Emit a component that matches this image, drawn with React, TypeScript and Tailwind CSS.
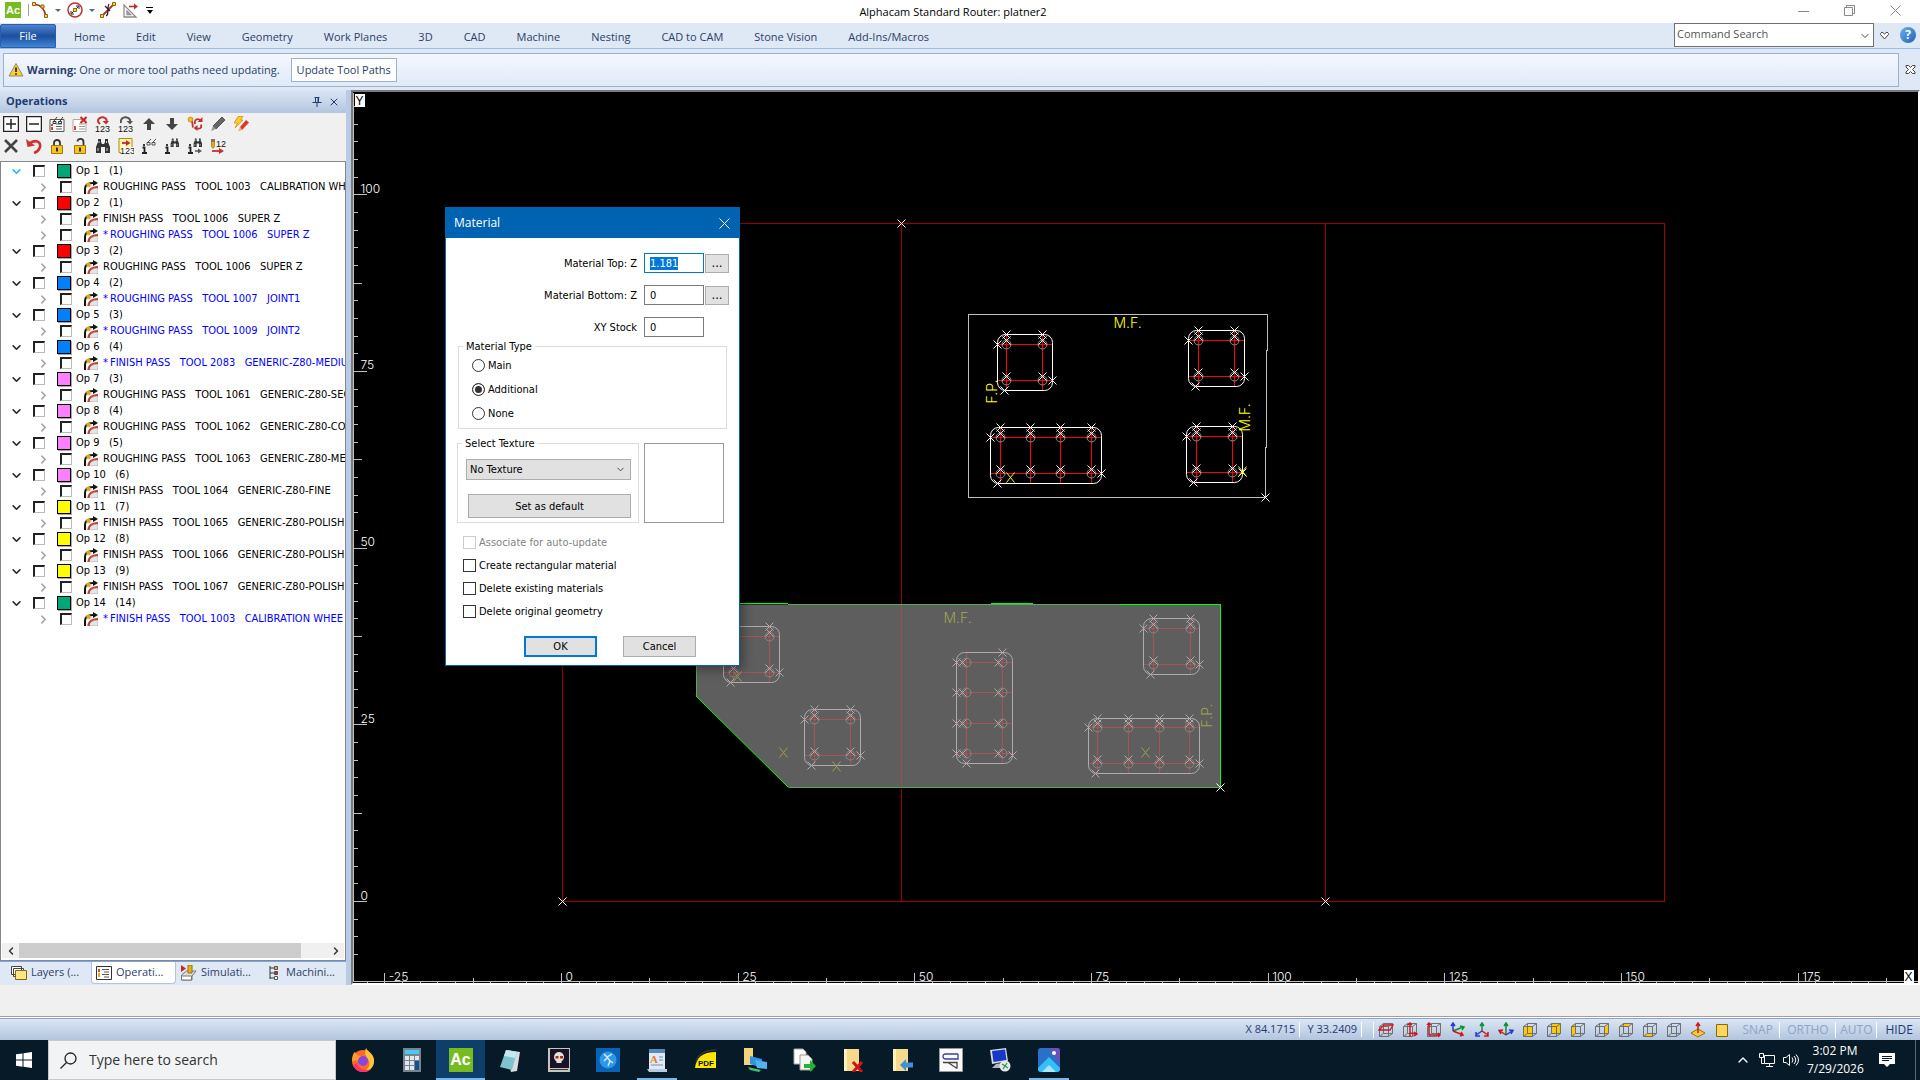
'use client';

// CORE
import { useEffect, useRef, useState } from 'react';
import type { ReactNode } from 'react';

// ICONS
import { BsChevronDown, BsChevronRight } from 'react-icons/bs';
import { ChevronDown, ChevronLeft, ChevronRight, ChevronUp, X } from 'lucide-react';

// INTERFACES
interface Pass {
  text: string;
  stale?: boolean;
}

interface Operation {
  id: number;
  count: number;
  swatch: string;
  passes: Pass[];
}

interface PodShape {
  x: number;
  y: number;
  w: number;
  h: number;
  cols: number[];
  rows: number[];
  turned?: boolean;
}

// CONSTANTS
const MENU = [
  'Home',
  'Edit',
  'View',
  'Geometry',
  'Work Planes',
  '3D',
  'CAD',
  'Machine',
  'Nesting',
  'CAD to CAM',
  'Stone Vision',
  'Add-Ins/Macros',
];

const OPERATIONS: Operation[] = [
  { id: 1, count: 1, swatch: 'bg-[#00a878]', passes: [{ text: 'ROUGHING PASS   TOOL 1003   CALIBRATION WH' }] },
  {
    id: 2,
    count: 1,
    swatch: 'bg-[#ff0000]',
    passes: [
      { text: 'FINISH PASS   TOOL 1006   SUPER Z' },
      { text: 'ROUGHING PASS   TOOL 1006   SUPER Z', stale: true },
    ],
  },
  { id: 3, count: 2, swatch: 'bg-[#ff0000]', passes: [{ text: 'ROUGHING PASS   TOOL 1006   SUPER Z' }] },
  { id: 4, count: 2, swatch: 'bg-[#0080ff]', passes: [{ text: 'ROUGHING PASS   TOOL 1007   JOINT1', stale: true }] },
  { id: 5, count: 3, swatch: 'bg-[#0080ff]', passes: [{ text: 'ROUGHING PASS   TOOL 1009   JOINT2', stale: true }] },
  { id: 6, count: 4, swatch: 'bg-[#0080ff]', passes: [{ text: 'FINISH PASS   TOOL 2083   GENERIC-Z80-MEDIU', stale: true }] },
  { id: 7, count: 3, swatch: 'bg-[#ff80ff]', passes: [{ text: 'ROUGHING PASS   TOOL 1061   GENERIC-Z80-SEG' }] },
  { id: 8, count: 4, swatch: 'bg-[#ff80ff]', passes: [{ text: 'ROUGHING PASS   TOOL 1062   GENERIC-Z80-COA' }] },
  { id: 9, count: 5, swatch: 'bg-[#ff80ff]', passes: [{ text: 'ROUGHING PASS   TOOL 1063   GENERIC-Z80-MED' }] },
  { id: 10, count: 6, swatch: 'bg-[#ff80ff]', passes: [{ text: 'FINISH PASS   TOOL 1064   GENERIC-Z80-FINE' }] },
  { id: 11, count: 7, swatch: 'bg-[#ffff00]', passes: [{ text: 'FINISH PASS   TOOL 1065   GENERIC-Z80-POLISH' }] },
  { id: 12, count: 8, swatch: 'bg-[#ffff00]', passes: [{ text: 'FINISH PASS   TOOL 1066   GENERIC-Z80-POLISH' }] },
  { id: 13, count: 9, swatch: 'bg-[#ffff00]', passes: [{ text: 'FINISH PASS   TOOL 1067   GENERIC-Z80-POLISH' }] },
  { id: 14, count: 14, swatch: 'bg-[#00a878]', passes: [{ text: 'FINISH PASS   TOOL 1003   CALIBRATION WHEE', stale: true }] },
];

const UPPER_PODS: PodShape[] = [
  { x: 997, y: 334, w: 55, h: 56, cols: [1006, 1042], rows: [344, 380] },
  { x: 1188, y: 330, w: 56, h: 56, cols: [1198, 1234], rows: [340, 376] },
  { x: 990, y: 427, w: 111, h: 56, cols: [1000, 1030, 1060, 1091], rows: [437, 473] },
  { x: 1186, y: 426, w: 56, h: 56, cols: [1196, 1232], rows: [436, 472] },
];

const LOWER_PODS: PodShape[] = [
  { x: 723, y: 626, w: 56, h: 56, cols: [733, 769], rows: [636, 672] },
  { x: 804, y: 709, w: 56, h: 56, cols: [814, 850], rows: [719, 755] },
  { x: 956, y: 652, w: 56, h: 111, cols: [966, 1002], rows: [662, 692, 723, 753], turned: true },
  { x: 1143, y: 618, w: 56, h: 56, cols: [1153, 1190], rows: [628, 664] },
  { x: 1088, y: 718, w: 111, h: 55, cols: [1097, 1128, 1159, 1189], rows: [727, 763] },
];

// Pixels for one drawing unit
const UNIT = 7.067;

function Icon({ size = 'size-4', box = 16, children }: { size?: string; box?: number; children: ReactNode }) {
  return (
    <svg viewBox={`0 0 ${box} ${box}`} className={`${size} shrink-0`} fill="none" aria-hidden="true">
      {children}
    </svg>
  );
}

function AcLogo({ className }: { className: string }) {
  return (
    <span
      className={`flex shrink-0 items-center justify-center bg-[#76bc21] font-['Liberation_Sans',sans-serif] font-bold text-white ${className}`}
    >
      Ac
    </span>
  );
}

function TitleBar() {
  return (
    <header className="flex h-[23px] items-start bg-white px-[5px] text-[11px]">
      <div className="flex h-5 flex-1 items-center">
        <AcLogo className="size-4 text-[11px]" />
        <span className="ml-[7px] h-3 w-px bg-[#a0a0a0]" />
        <button aria-label="Line" className="ml-[3px]">
          <Icon>
            <path d="M2 2.5C8 2 12 6 14 14" stroke="#b02a2a" strokeWidth="1.6" />
            <path d="M.5.5h3v3h-3zM9 3h3v3H9zM12.5 12.5h3v3h-3z" fill="#ffd24a" stroke="#8a6a00" />
          </Icon>
        </button>
        <span className="ml-[7px] border-x-[3px] border-t-[3px] border-x-transparent border-t-[#4f6a94]" />
        <button aria-label="Circle" className="ml-[6px]">
          <Icon>
            <circle cx="8" cy="8" r="7" stroke="#b83232" strokeWidth="1.5" />
            <path d="M4.500 11.500l7-7M9 4h3v3M4 9v3h3" stroke="#222" />
            <path d="M6.500 6.500h3v3h-3z" fill="#ffd24a" stroke="#8a6a00" />
          </Icon>
        </button>
        <span className="ml-[6px] border-x-[3px] border-t-[3px] border-x-transparent border-t-[#4f6a94]" />
        <button aria-label="Trim" className="ml-[5px]">
          <Icon>
            <path d="M2 14L14 2" stroke="#b83232" strokeWidth="2" />
            <path d="M6 14c4-2 0-6 3-12M5 4l5 5" stroke="#222" strokeWidth="1.200" />
            <path d="M.5 12.500h3v3h-3zM12.500.5h3v3h-3z" fill="#ffd24a" stroke="#8a6a00" />
          </Icon>
        </button>
        <button aria-label="Measure" className="ml-[7px]">
          <Icon>
            <path d="M1 3v12h12zM4 9v3.500h3.500z" stroke="#8c8c8c" strokeWidth="1.300" />
            <path d="M6 4.500h6" stroke="#b83232" strokeWidth="1.600" />
            <path d="M11 1.500l4 3-4 3z" fill="#b83232" />
          </Icon>
        </button>
        <button aria-label="Customize" className="ml-[7px] flex flex-col items-center gap-[2px]">
          <span className="h-px w-[7px] bg-black" />
          <span className="border-x-[3px] border-t-[4px] border-x-transparent border-t-black" />
        </button>
      </div>
      <h1 className="h-6 leading-6 text-black">Alphacam Standard Router: platner2</h1>
      <div className="flex h-5 flex-1 items-center justify-end gap-[35px] pr-[14px]">
        <button aria-label="Minimize">
          <Icon size="size-[11px]" box={11}>
            <path d="M0 6.500h11" stroke="#888" />
          </Icon>
        </button>
        <button aria-label="Restore">
          <Icon size="size-[11px]" box={11}>
            <path d="M.5 2.500h8v8h-8zM2.500 2.500v-2h8v8h-2" stroke="#888" />
          </Icon>
        </button>
        <button aria-label="Close">
          <Icon size="size-[11px]" box={11}>
            <path d="M.5.5l10 10M10.500.5l-10 10" stroke="#888" />
          </Icon>
        </button>
      </div>
    </header>
  );
}

function Ribbon() {
  return (
    <nav className="flex h-[26px] items-start border-b border-[#9dbde5] bg-[#dfe8f5] text-[11px] text-[#2c3f66]">
      <button className="mt-px h-6 w-14 rounded-t-xs border border-[#2a5db0] bg-linear-to-b from-[#4f83cd] via-[#1d4f9f] via-50% to-[#3f86d8] text-white">
        File
      </button>
      <div className="ml-[18px] flex flex-1 gap-[31px] leading-7">
        {MENU.map((m) => (
          <a key={m} href="#" className="whitespace-nowrap">
            {m}
          </a>
        ))}
      </div>
      <div className="flex items-center">
        <label className="flex h-6 w-[200px] items-start border border-[#707070] bg-white">
          <input
            aria-label="Command search"
            placeholder="Command Search"
            className="h-[18px] w-full min-w-0 px-[2px] outline-none placeholder:text-[#555]"
          />
          <ChevronDown className="mt-[6px] mr-[2px] size-3 shrink-0 text-[#444]" />
        </label>
        <button aria-label="Ribbon options" className="ml-[5px]">
          <Icon size="size-[11px]" box={11}>
            <path d="M1.500 3.500L3 2l2.500 2L8 2l1.500 1.500v1L5.500 9l-4-4.500z" fill="#fff" stroke="#444" />
          </Icon>
        </button>
        <button aria-label="Help" className="mr-1 ml-[10px] size-4 rounded-full bg-linear-to-br from-[#6bb0f0] to-[#1d64b8] text-xs leading-4 font-bold text-white">
          ?
        </button>
      </div>
    </nav>
  );
}

function WarningBar() {
  return (
    <div className="flex h-[41px] items-start bg-[#dfe8f5] pt-1 pl-[3px] text-[11px] text-[#2c3f66]">
      <div className="flex h-[34px] flex-1 items-center border border-[#9db0d0] bg-linear-to-b from-[#f3f7fe] to-[#e0ebf8]">
        <Icon size="ml-1 size-4">
          <path d="M8 1.500L15 14H1z" fill="#ffcf24" stroke="#8a8a8a" strokeLinejoin="round" />
          <path d="M8 5.500v4.500M8 11.300v1.400" stroke="#222" strokeWidth="1.700" />
        </Icon>
        <p className="ml-[3px] whitespace-nowrap">
          <b>Warning:</b> One or more tool paths need updating.
        </p>
        <button className="ml-[11px] h-6 w-[106px] border border-[#9db0d0] bg-white whitespace-nowrap">
          Update Tool Paths
        </button>
      </div>
      <button aria-label="Dismiss warning" className="mr-1 ml-[6px] mt-[11px]">
        <Icon size="size-[11px]" box={11}>
          <path
            d="M1 1.500h2.500l2 2 2-2H10v1.500L7.500 5.500 10 8v1.500H7.500l-2-2-2 2H1V8l2.500-2.500L1 3z"
            fill="#fff"
            stroke="#444"
          />
        </Icon>
      </button>
    </div>
  );
}

function Digits({ y = 15.5, children = '123', x = 0 }: { y?: number; children?: string; x?: number }) {
  return (
    <text x={x} y={y} fontSize="9" fontFamily="Liberation Sans" fill="#111">
      {children}
    </text>
  );
}

const Binoculars = ({ x = 0, y = 0, k = 1 }: { x?: number; y?: number; k?: number }) => (
  <g transform={`translate(${x} ${y}) scale(${k})`}>
    <path d="M3 1h3v3l1 2h2l1-2V1h3v3l2 5v6h-5V9H6v6H1V9l2-5z" fill="#333" />
    <path d="M3 10v3M12 10v3M4 3v2M11.500 3v2" stroke="#ccc" strokeWidth="1" />
  </g>
);

const Padlock = ({ open = false }: { open?: boolean }) => (
  <>
    <path d={open ? 'M5.500 3.500C5.500 0 11.500 0 11.500 4v4' : 'M5 8V5c0-4 6-4 6 0v3'} stroke="#333" strokeWidth="1.800" />
    <path d="M2.500 7.500h11v8h-11z" fill="#f6c326" stroke="#a37800" />
    <path d="M8 9.500v4" stroke="#333" strokeWidth="2" />
  </>
);

const TOOLS_TOP: [string, ReactNode][] = [
  ['Expand all', <path d="M.5.5h15v15H.5zM3 8h10M8 3v10" stroke="#222" strokeWidth="1.500" fill="#fff" />],
  ['Collapse all', <path d="M.5.5h15v15H.5zM3 8h10" stroke="#222" strokeWidth="1.500" fill="#fff" />],
  [
    'View operation',
    <>
      <path d="M1 3.500h14v12H1z" fill="#fff" stroke="#555" />
      <path d="M7 8h6M7 10.500h6M7 13h6" stroke="#666" />
      <path d="M3 8v2M3 11v3" stroke="#d43" strokeWidth="2" />
      <path d="M4 5.500h3v2H4zM9.500 5.500h3v2h-3zM5 5l3-4M11 5l3-4" fill="#eee" stroke="#333" />
    </>,
  ],
  [
    'Remove operation',
    <>
      <path d="M1 3.500h13v12H1z" fill="#fff" stroke="#aaa" />
      <path d="M7 8h6M7 10.500h6M7 13h6" stroke="#999" />
      <path d="M3 10v4" stroke="#d43" strokeWidth="2" />
      <path d="M8.500 1l6 6M14.500 1l-6 6" stroke="#d02020" strokeWidth="2" />
    </>,
  ],
  [
    'Renumber',
    <>
      <path d="M5 8C1 5 4 .8 8 1.300S12 5 11 6" stroke="#c03030" strokeWidth="2" />
      <path d="M7.500 5h6.500l-3 3.500z" fill="#c03030" />
      <Digits />
    </>,
  ],
  [
    'Restore order',
    <>
      <path d="M3 7C2 3 5 1 8 1.300S13 4 12 6" stroke="#555" strokeWidth="2" />
      <path d="M8.500 5H15l-3 3.500z" fill="#555" />
      <Digits />
    </>,
  ],
  ['Move up', <path d="M8 2l6 6h-4v6H6V8H2z" fill="#444" />],
  ['Move down', <path d="M8 14l6-6h-4V2H6v6H2z" fill="#444" />],
  [
    'Update tool path',
    <>
      <path d="M4 3.500c2 2 1 4 2 8M14 4.500C10 1.500 7 4 8 8M9 12c4 1.500 6 0 5-3.500" stroke="#c03030" strokeWidth="1.800" />
      <path d="M10.500 6h5V1zM6.500 12l4-3v6z" fill="#c03030" />
      <circle cx="3.500" cy="3.500" r="2.500" fill="#f5b826" stroke="#b07a00" strokeWidth=".6" />
    </>,
  ],
  [
    'Edit',
    <>
      <path d="M3 10L12 1l3 3-9 9z" fill="#666" stroke="#555" />
      <path d="M3 10l3 3-5 2z" fill="#999" />
    </>,
  ],
  [
    'Quick edit',
    <>
      <path d="M7 11l6-7 3 2.500L9 14z" fill="#d83a2a" />
      <path d="M7 11l2 3-4 1.500z" fill="#e8b070" />
      <path d="M5 .5h5L7.500 4H10l-8 8 2.500-5H1z" fill="#ffcb2d" stroke="#d08a00" strokeWidth=".7" />
    </>,
  ],
];

const TOOLS_BOTTOM: [string, ReactNode][] = [
  ['Delete', <path d="M2 2l12 12M14 2L2 14" stroke="#444" strokeWidth="2.600" />],
  [
    'Undo',
    <>
      <path d="M4 5c6-4 11-1 10 4-1 3-3 5-6 6" stroke="#d22f2f" strokeWidth="2.600" />
      <path d="M0 1l1.500 8L9 7.500z" fill="#d22f2f" />
    </>,
  ],
  ['Lock', <Padlock />],
  ['Unlock', <Padlock open />],
  ['Find', <Binoculars />],
  [
    'Order by tool',
    <>
      <path d="M1 .5h13v14H1z" fill="#fff6b0" stroke="#b8860b" />
      <path d="M4 5h5" stroke="#c03030" strokeWidth="1.800" />
      <path d="M8 2l4.500 3L8 8z" fill="#c03030" />
      <path d="M3 9h13v7H3z" fill="#fff" />
      <Digits x={2} />
    </>,
  ],
  [
    'Information',
    <>
      <path d="M3 6v2M1.500 9.500h2V15M1 15h5" stroke="#222" strokeWidth="1.800" />
      <path d="M6 4.500h3v2.500H6zM11 4.500h3v2.500h-3zM7 4l3-3M12 4l3-3" stroke="#555" />
    </>,
  ],
  [
    'Find information',
    <>
      <path d="M3 6v2M1.500 9.500h2V15M1 15h5" stroke="#222" strokeWidth="1.800" />
      <Binoculars x={6} y={0} k={0.6} />
    </>,
  ],
  [
    'Find next',
    <>
      <path d="M3 6v2M1.500 9.500h2V15M1 15h5" stroke="#222" strokeWidth="1.800" />
      <Binoculars x={6} y={0} k={0.6} />
      <path d="M8 13h4" stroke="#555" strokeWidth="1.500" />
      <path d="M11 10.500l4 2.500-4 2.500z" fill="#555" />
    </>,
  ],
  [
    'Tool order',
    <>
      <path d="M1 1h4v3H1z" fill="#777" />
      <path d="M1.500 3.500h3v5l-1.500 2-1.500-2z" fill="#e6a817" stroke="#8a6a00" strokeWidth=".6" />
      <Digits x={6} y={9}>
        12
      </Digits>
      <path d="M2 13h8" stroke="#c03030" strokeWidth="1.800" />
      <path d="M9 10l5 3-5 3z" fill="#c03030" />
    </>,
  ],
];

function ToolRow({ tools }: { tools: [string, ReactNode][] }) {
  return (
    <div className="flex gap-[7px] pl-[3px]">
      {tools.map(([name, art]) => (
        <button key={name} aria-label={name}>
          <Icon>{art}</Icon>
        </button>
      ))}
    </div>
  );
}

function TreeCheck({ label }: { label: string }) {
  return (
    <input
      type="checkbox"
      aria-label={label}
      className="size-3 shrink-0 appearance-none border-t-2 border-l-2 border-r border-b border-t-[#222] border-r-[#bbb] border-b-[#bbb] border-l-[#222] bg-white"
    />
  );
}

function OperationsTree() {
  return (
    <ul className="flex-1 overflow-hidden pt-px font-['DejaVu_Sans_Condensed','DejaVu_Sans',sans-serif] text-[11px] leading-4 whitespace-pre text-black">
      {OPERATIONS.map((op) => (
        <li key={op.id}>
          <div className="flex h-4 items-center">
            <BsChevronDown
              className={`ml-[11px] size-[9px] shrink-0 stroke-2 ${op.id === 1 ? 'text-[#26c0f0]' : 'text-[#333]'}`}
            />
            <span className="ml-3 flex">
              <TreeCheck label={`Op ${op.id}`} />
            </span>
            <span className={`ml-3 size-[14px] shrink-0 border border-black shadow-[1px_1px_0_#aaa] ${op.swatch}`} />
            <span className="ml-[5px]">{`Op ${op.id}   (${op.count})`}</span>
          </div>
          <ul>
            {op.passes.map((p) => (
              <li key={p.text} className="flex h-4 items-center">
                <BsChevronRight className="ml-[38px] size-[9px] shrink-0 stroke-2 text-[#aaa]" />
                <span className="ml-3 flex">
                  <TreeCheck label={p.text} />
                </span>
                <Icon size="ml-3 size-[14px]" box={14}>
                  <path d="M1 14V9c0-4 3-6 8-6" stroke="#111" strokeWidth="2" />
                  <path d="M9 0l5 3-5 3z" fill="#111" />
                  <path d="M5 14c0-4 4-6 9-6v6z" fill="#e4e4e4" stroke="#999" strokeWidth=".6" />
                  <path d="M4.500 14c0-4.500 4-7 9.500-7" stroke="#c0403a" strokeWidth="2.200" />
                  <circle cx="4.500" cy="5" r="2.300" fill="#e6a817" />
                </Icon>
                <span className={`ml-[5px] flex shrink-0 gap-[2px] ${p.stale ? 'text-[#0000ff]' : ''}`}>
                  {p.stale && <span>*</span>}
                  {p.text}
                </span>
              </li>
            ))}
          </ul>
        </li>
      ))}
    </ul>
  );
}

const PANEL_TABS: [string, ReactNode][] = [
  [
    'Layers (...',
    <>
      <path d="M.5 1.500h10v8H.5zM2.500 3.500h10v8h-10z" fill="#fff" stroke="#444" />
      <path d="M4.500 5.500h11v9h-11z" fill="#ffe58a" stroke="#8a6a00" />
    </>,
  ],
  [
    'Operati...',
    <>
      <path d="M.5 1.500h15v13H.5z" fill="#fff" stroke="#333" />
      <path d="M6 4.500h7M8 7h5M6 9.500h7M8 12h5" stroke="#555" />
      <path d="M3 4v3" stroke="#d43" strokeWidth="2" />
      <path d="M3 8v4" stroke="#e6a817" strokeWidth="2" />
    </>,
  ],
  [
    'Simulati...',
    <>
      <path d="M.5 10l5-4H15l-4 5v4H.5z" fill="#ddd" stroke="#777" />
      <path d="M0 0l5 3.500L0 7z" fill="#c0282c" />
      <path d="M7 0h4v8H7z" fill="#f0b020" stroke="#9a6f00" />
      <path d="M.5 11h10v4H.5z" fill="#fff" stroke="#777" />
    </>,
  ],
  [
    'Machini...',
    <>
      <path d="M4 1v13M4 3h5M4 8h5M4 13h5" stroke="#333" />
      <path d="M8.500 1.500h3v3h-3z" fill="#f0b020" stroke="#555" />
      <path d="M8.500 6.500h3v3h-3z" fill="#d02020" stroke="#555" />
      <path d="M8.500 11.500h3v3h-3z" fill="#fff" stroke="#555" />
    </>,
  ],
];

function OperationsPanel() {
  const [tab, setTab] = useState('Operati...');

  return (
    <aside className="flex w-[346px] shrink-0 flex-col text-[11px]">
      <div className="flex h-[23px] items-center bg-linear-to-b from-[#dbe6f4] to-[#b3c6e0] pr-[6px] pl-[6px] text-[#1f3b73]">
        <h2 className="flex-1 font-bold">Operations</h2>
        <button aria-label="Pin" className="mr-[6px]">
          <Icon size="size-[10px]" box={10}>
            <path d="M2.500.5h5M3.500.5v5M6.500.5v5M.5 5.500h9M5 5.500V10" stroke="#1f3b73" />
            <path d="M6 1v4" stroke="#1f3b73" />
          </Icon>
        </button>
        <button aria-label="Close panel">
          <X className="size-3" />
        </button>
      </div>
      <div className="flex h-12 flex-col gap-[6px] bg-[#f0f0f0] pt-[3px]">
        <ToolRow tools={TOOLS_TOP} />
        <ToolRow tools={TOOLS_BOTTOM} />
      </div>
      <div className="flex flex-1 flex-col border border-[#828790] bg-white">
        <OperationsTree />
        <div className="mx-px mb-[2px] flex h-[15px] items-center bg-[#f0f0f0]">
          <button aria-label="Scroll left" className="flex w-[17px] justify-center">
            <ChevronLeft className="size-3 text-[#333]" strokeWidth={3} />
          </button>
          <span className="h-full w-[282px] bg-[#cdcdcd]" />
          <span className="flex-1" />
          <button aria-label="Scroll right" className="flex w-[17px] justify-center">
            <ChevronRight className="size-3 text-[#333]" strokeWidth={3} />
          </button>
        </div>
      </div>
      <div className="flex h-6 items-start border-t border-[#7ba3e6] bg-[#dfe8f5] pl-[6px] text-[#2c3f66]">
        {PANEL_TABS.map(([name, art]) => (
          <button
            key={name}
            onClick={() => setTab(name)}
            className={`flex h-[22px] flex-1 items-center gap-1 rounded-b-sm border-x border-b px-1 whitespace-nowrap ${name === tab ? 'border-[#b3c4de] bg-white' : 'border-transparent'}`}
          >
            <Icon>{art}</Icon>
            {name}
          </button>
        ))}
      </div>
    </aside>
  );
}

function Mark({ x, y, tall = 4 }: { x: number; y: number; tall?: number }) {
  return <path d={`M${x - 4} ${y - tall}L${x + 4} ${y + tall}M${x + 4} ${y - tall}L${x - 4} ${y + tall}`} />;
}

function Pod({ pod, dim = false }: { pod: PodShape; dim?: boolean }) {
  const { x, y, w, h, cols, rows, turned } = pod;
  const lastRow = rows[rows.length - 1];
  const lastCol = cols[cols.length - 1];

  return (
    <g>
      <g stroke={dim ? '#a65454' : '#ff0000'} shapeRendering="crispEdges">
        {cols.map((c) => (
          <path key={c} d={`M${c} ${y}V${y + h}`} />
        ))}
        {rows.map((r) => (
          <path key={r} d={`M${x} ${r}H${x + w}`} />
        ))}
      </g>
      <g stroke={dim ? '#888' : '#909090'}>
        {cols.map((c) => rows.map((r) => <circle key={`${c}-${r}`} cx={c} cy={r} r={4.5} />))}
      </g>
      <g stroke={dim ? '#acacac' : '#fff'}>
        <rect x={x} y={y} width={w} height={h} rx={8} />
        {cols.map((c) =>
          rows.map((r) => <Mark key={`${c}-${r}`} x={turned ? c - 4 : c} y={turned ? r : r - 4} />)
        )}
        {turned ? rows.map((r) => <Mark key={r} x={x} y={r} />) : cols.map((c) => <Mark key={c} x={c} y={y} />)}
        <Mark x={turned ? lastCol : x} y={turned ? y : rows[0]} />
        <Mark x={x + w} y={turned ? lastRow + 2 : lastRow} />
        <Mark x={turned ? cols[0] : x + 7} y={y + h} />
      </g>
    </g>
  );
}

function Rulers() {
  const left = Array.from({ length: 49 }, (_, i) => i - 3).filter((i) => i <= 45);
  const bottom = Array.from({ length: 88 }, (_, i) => i - 11).filter((i) => i <= 75);

  return (
    <g shapeRendering="crispEdges" stroke="#c0c0c0">
      <path d="M353 92V981M353 981H1917" />
      {left.map((i) => {
        const y = Math.round(901 - i * 2.5 * UNIT);
        return <path key={i} d={`M353 ${y}h${i % 10 === 0 ? 13 : i % 5 === 0 ? 8 : 4}`} />;
      })}
      {bottom.map((i) => {
        const x = Math.round(561 + i * 2.5 * UNIT);
        return <path key={i} d={`M${x} 983V${i % 10 === 0 ? 972 : i % 5 === 0 ? 977 : 981}`} />;
      })}
      <g stroke="none" fill="#fff" fontSize="12" fontWeight="300" fontFamily="Inter">
        {[0, 25, 50, 75, 100].map((n) => (
          <text key={n} x="360" y={901 - n * UNIT - 2}>
            {n}
          </text>
        ))}
        {[-25, 0, 25, 50, 75, 100, 125, 150, 175].map((n) => (
          <text key={n} x={561 + n * UNIT + 4} y="980">
            {n}
          </text>
        ))}
      </g>
      <g stroke="none" fontSize="12" fontFamily="Liberation Sans">
        <path d="M354 93h10v13h-10zM1903 969h10v13h-10z" fill="#fff" />
        <text x="355" y="104" fill="#000">
          Y
        </text>
        <text x="1904" y="980" fill="#000">
          X
        </text>
      </g>
    </g>
  );
}

function Drawing() {
  return (
    <svg viewBox="353 92 1565 891" className="block w-full" fill="none" role="img" aria-label="Router table layout">
      <g transform="translate(.5 .5)">
        <path d="M696 604H1220V787H788L696 696z" fill="#5e5e5e" />
        <g shapeRendering="crispEdges">
          <path d="M562 223H1664V901H562zM1325 223V901M901 223V604M901 788V901" stroke="#a00000" />
          <path d="M901 604V787" stroke="#9c5050" />
          <path d="M787 604H1119M788 787H1220M696 604V696" stroke="#57a857" />
          <path d="M696 603H787M990 603H1032M1119 604H1220V787" stroke="#00ff00" />
        </g>
        <path d="M696 696L788 787" stroke="#00ff00" />
        <path d="M1265 497H968V314H1267V350H1266V447H1265V497" stroke="#c0c0c0" shapeRendering="crispEdges" />

        {UPPER_PODS.map((p) => (
          <Pod key={`${p.x}-${p.y}`} pod={p} />
        ))}
        {LOWER_PODS.map((p) => (
          <Pod key={`${p.x}-${p.y}`} pod={p} dim />
        ))}

        <g stroke="#fff">
          <Mark x={901} y={223} />
          <Mark x={562} y={901} />
          <Mark x={1325} y={901} />
          <Mark x={1265} y={497} />
          <Mark x={1220} y={787} />
        </g>
        <g stroke="#ffff00">
          <Mark x={1010} y={477} tall={5} />
          <Mark x={1242} y={471} tall={5} />
        </g>
        <g stroke="#a0a050">
          <Mark x={783} y={752} tall={5} />
          <Mark x={836} y={766} tall={5} />
          <Mark x={1145} y={752} tall={5} />
          <Mark x={737} y={676} tall={5} />
        </g>
        <g fontSize="14" fontWeight="300" fontFamily="Inter" fill="#ffff00">
          <text x="1113" y="327">
            M.F.
          </text>
          <text transform="translate(996 403) rotate(-90)">F.P.</text>
          <text transform="translate(1249 431) rotate(-90)">M.F.</text>
        </g>
        <g fontSize="14" fontWeight="300" fontFamily="Inter" fill="#a0a050">
          <text x="943" y="622">
            M.F.
          </text>
          <text transform="translate(1211 727) rotate(-90)">F.P.</text>
        </g>
        <Rulers />
      </g>
    </svg>
  );
}

function Field({ id, label, value, browse }: { id: string; label: string; value: string; browse?: boolean }) {
  const ref = useRef<HTMLInputElement>(null);

  useEffect(() => {
    // First field opens with its value selected
    if (id === 'top') {
      ref.current?.focus();
      ref.current?.select();
    }
  }, [id]);

  return (
    <div className="flex h-5 items-center">
      <label htmlFor={id} className="flex-1 pr-[7px] text-right">
        {label}
      </label>
      <input
        ref={ref}
        id={id}
        defaultValue={value}
        className="h-5 w-[60px] border border-[#7a7a7a] px-[5px] outline-none selection:bg-[#0078d7] selection:text-white focus:border-[#0078d7]"
      />
      <span className="ml-px flex w-6">
        {browse && (
          <button aria-label={`Browse ${label}`} className="h-[19px] w-6 border border-[#adadad] bg-[#e1e1e1] text-[13px] leading-4">
            ...
          </button>
        )}
      </span>
    </div>
  );
}

function Tick({ label, disabled }: { label: string; disabled?: boolean }) {
  return (
    <label className={`flex h-[13px] items-center gap-[3px] ${disabled ? 'text-[#838383]' : ''}`}>
      <input
        type="checkbox"
        disabled={disabled}
        className="size-[13px] appearance-none border border-[#333] bg-white disabled:border-[#ccc]"
      />
      {label}
    </label>
  );
}

function MaterialDialog() {
  const [type, setType] = useState('Additional');

  return (
    <section
      role="dialog"
      aria-label="Material"
      className="absolute top-[115px] left-[92px] w-[295px] border border-[#0063b1] bg-white font-['DejaVu_Sans_Condensed','DejaVu_Sans',sans-serif] text-[11px] leading-[13px] text-black shadow-[3px_4px_10px_rgba(0,0,0,0.35)]"
    >
      <div className="flex h-[30px] items-center justify-between bg-[#0063b1] pr-[9px] pl-2 font-['Open_Sans',sans-serif] text-xs text-white">
        <h2>Material</h2>
        <button aria-label="Close dialog">
          <Icon size="size-[11px]" box={11}>
            <path d="M.5.5l10 10M10.500.5l-10 10" stroke="#fff" />
          </Icon>
        </button>
      </div>

      <div className="flex flex-col pt-[15px] pr-[10px] pb-2 pl-[11px]">
        <div className="flex flex-col gap-3">
          <Field id="top" label="Material Top: Z" value="1.181" browse />
          <Field id="bottom" label="Material Bottom: Z" value="0" browse />
          <Field id="stock" label="XY Stock" value="0" />
        </div>

        <fieldset className="mt-[3px] mr-[2px] ml-px h-[89px] border border-[#dcdcdc] px-[13px]">
          <legend className="-ml-[9px] px-[3px]">Material Type</legend>
          <div className="flex flex-col gap-[11px] pt-[6px]">
            {['Main', 'Additional', 'None'].map((t) => (
              <label key={t} className="flex h-[13px] items-center gap-[3px]">
                <input
                  type="radio"
                  name="type"
                  checked={type === t}
                  onChange={() => setType(t)}
                  className="size-[13px] appearance-none rounded-full border border-[#333] bg-white checked:bg-[#333] checked:shadow-[inset_0_0_0_2px_#fff]"
                />
                {t}
              </label>
            ))}
          </div>
        </fieldset>

        <div className="mt-2 flex items-end gap-[5px]">
          <fieldset className="h-[86px] w-[182px] border border-[#dcdcdc] pr-[7px] pl-2">
            <legend className="-ml-1 px-[3px]">Select Texture</legend>
            <div className="mt-[9px] flex h-[21px] items-center border border-[#adadad] bg-[#e1e1e1] pr-1">
              <select aria-label="Texture" className="h-full flex-1 appearance-none pl-[3px] outline-none">
                <option>No Texture</option>
              </select>
              <ChevronDown className="size-[11px] text-[#444]" />
            </div>
            <button className="mt-[14px] ml-[2px] h-6 w-[163px] border border-[#adadad] bg-[#e1e1e1]">
              Set as default
            </button>
          </fieldset>
          <div className="size-20 border border-[#999]" />
        </div>

        <div className="mt-[13px] ml-[6px] flex flex-col gap-[10px]">
          <Tick label="Associate for auto-update" disabled />
          <Tick label="Create rectangular material" />
          <Tick label="Delete existing materials" />
          <Tick label="Delete original geometry" />
        </div>

        <div className="mt-[18px] flex justify-end gap-[26px] pr-[33px]">
          <button className="h-[21px] w-[73px] border-2 border-[#0078d7] bg-[#e1e1e1]">OK</button>
          <button className="h-[21px] w-[73px] border border-[#adadad] bg-[#e1e1e1]">Cancel</button>
        </div>
      </div>
    </section>
  );
}

// Box drawn as a wire frame with one face filled
function Cube({ face }: { face?: string }) {
  return (
    <>
      {face && <path d={face} fill="#ffc800" />}
      <path d="M1.500 4.500h9v10h-9zM5.500 1.500h9v10h-9zM1.500 4.500l4-3M10.500 4.500l4-3M1.500 14.500l4-3M10.500 14.500l4-3" stroke="#707070" />
    </>
  );
}

const VIEW_ICONS: [string, ReactNode][] = [
  [
    'XY plane',
    <>
      <Cube />
      <path d="M1 8L6 3h9l-3 5z" stroke="#d01818" strokeWidth="1.300" />
    </>,
  ],
  [
    'XZ plane',
    <>
      <Cube />
      <path d="M8 15V1M6 3l2-2 2 2M8 11l6 1M12 10l3 2-3 2" stroke="#d01818" strokeWidth="1.500" />
    </>,
  ],
  [
    'YZ plane',
    <>
      <Cube />
      <path d="M3 13V1M1 3l2-2 2 2M3 13h11M12 11l2 2-2 2" stroke="#d01818" strokeWidth="1.500" />
    </>,
  ],
  [
    'Isometric 1',
    <>
      <path d="M3 9V2M1 4l2-3 2 3" stroke="#2838d0" strokeWidth="1.500" />
      <path d="M3 9l10-4M10 4l4 1-2 3" stroke="#109030" strokeWidth="1.500" />
      <path d="M3 9l10 4M11 10l2 3-3 1" stroke="#d01818" strokeWidth="1.500" />
    </>,
  ],
  [
    'Isometric 2',
    <>
      <path d="M8 9V2M6 4l2-3 2 3" stroke="#109030" strokeWidth="1.500" />
      <path d="M8 9l-6 4M2 10v4h4" stroke="#2838d0" strokeWidth="1.500" />
      <path d="M8 9l6 4M14 10v4h-4" stroke="#d01818" strokeWidth="1.500" />
    </>,
  ],
  [
    'Isometric 3',
    <>
      <path d="M8 13V2M6 4l2-3 2 3" stroke="#109030" strokeWidth="1.500" />
      <path d="M8 13L2 9M5 8L1 8.500 3 12" stroke="#d01818" strokeWidth="1.500" />
      <path d="M8 13l6-4M11 8l4 .5L13 12" stroke="#2838d0" strokeWidth="1.500" />
    </>,
  ],
  ['Front', <Cube face="M1.500 4.500h9v10h-9z" />],
  ['Back', <Cube face="M5.500 1.500h9v10h-9z" />],
  ['Left', <Cube face="M1.500 4.500l4-3v10l-4 3z" />],
  ['Right', <Cube face="M10.500 4.500l4-3v10l-4 3z" />],
  ['Top', <Cube face="M1.500 4.500l4-3h9l-4 3z" />],
  ['Bottom', <Cube face="M1.500 14.500l4-3h9l-4 3z" />],
  ['Wire frame', <Cube />],
  [
    'Plane normal',
    <>
      <path d="M1 11l7-4 7 4-7 4z" fill="#ffc83a" stroke="#a07000" />
      <path d="M8 11V1M6 4l2-3 2 3" stroke="#d01818" strokeWidth="1.500" />
    </>,
  ],
  ['Flat', <path d="M2.500 2.500h11v12h-11z" fill="#ffd75a" stroke="#8a6a00" />],
];

function StatusBar() {
  return (
    <footer className="flex h-[22px] items-center justify-end border-t border-[#8ba4cb] bg-linear-to-b from-[#dbe6f5] to-[#b2c5dd] pr-[7px] text-xs whitespace-nowrap text-[#1f3b73]">
      <span className="w-[55px] border-r border-white text-[11px]">X 84.1715</span>
      <span className="w-[62px] border-r border-white pl-[7px] text-[11px]">Y 33.2409</span>
      <span className="h-4 w-3 border-r border-white" />
      <div className="flex gap-2 pr-3 pl-1">
        {VIEW_ICONS.map(([name, art]) => (
          <button key={name} aria-label={name}>
            <Icon>{art}</Icon>
          </button>
        ))}
      </div>
      <button className="w-[38px] border-r border-white text-left text-[#8ea5c6]">SNAP</button>
      <button className="w-14 border-r border-white text-[#8ea5c6]">ORTHO</button>
      <button className="w-[41px] border-r border-white text-[#8ea5c6]">AUTO</button>
      <button className="pl-2">HIDE</button>
    </footer>
  );
}

const APPS: { name: string; open?: boolean; art: ReactNode }[] = [
  {
    name: 'Firefox',
    art: (
      <>
        <circle cx="12" cy="13" r="11" fill="#ff6a2b" />
        <path d="M15 0c2 4 8 6 8 13a11 11 0 01-11 11c6-3 8-8 5-13-2-3-4-5-2-11z" fill="#ffc43a" />
        <path d="M1 13c0-4 1-8 3-9l2 3 6 2-3 3z" fill="#ff9a2e" />
        <circle cx="12" cy="13" r="5" fill="#8a45e0" />
        <path d="M2 17a11 11 0 0018 4c-6 2-12 1-14-6z" fill="#f5356b" />
      </>
    ),
  },
  {
    name: 'Calculator',
    art: (
      <>
        <path d="M3 0h18v24H3z" fill="#76848f" />
        <path d="M5 2h14v4H5z" fill="#4cc8f5" />
        <path d="M5 8h4v4H5zM10 8h4v4h-4zM15 8h4v4h-4zM5 13h4v4H5zM10 13h4v4h-4zM5 18h4v4H5zM10 18h4v4h-4z" fill="#e3e7ea" />
        <path d="M15 13h4v9h-4z" fill="#174f8f" />
      </>
    ),
  },
  { name: 'Alphacam', open: true, art: null },
  {
    name: 'Notepad',
    art: (
      <>
        <path d="M8 2l14 2-3 19-6 1z" fill="#d9dde0" />
        <path d="M8 2l11 2-5 18-12-3z" fill="#7fc3cf" />
        <path d="M8 2l11 2-2 6-11-2z" fill="#c5e8ec" />
      </>
    ),
  },
  {
    name: 'Book',
    art: (
      <>
        <path d="M1 0h22v24H1z" fill="#c9c4bc" />
        <path d="M3 1h19v19H3z" fill="#17142a" />
        <circle cx="12" cy="9" r="5" fill="#e8e0d8" />
        <path d="M9.500 12h5v3h-5z" fill="#e8e0d8" />
        <path d="M8.500 8h3v2.500h-3zM13 8h3v2.500h-3z" fill="#b02a1a" />
        <path d="M3 21.500h18" stroke="#333" />
      </>
    ),
  },
  {
    name: 'Lizard',
    art: (
      <>
        <path d="M0 0h24v24H0z" fill="#0a62b4" />
        <circle cx="12" cy="12" r="8.500" fill="#2e97ea" />
        <path d="M8 6l3 3 5-3M11 9l3 4-2 5M13 12l4 3M11 10l-3 3" stroke="#d8efff" strokeWidth="1.400" />
      </>
    ),
  },
  {
    name: 'WordPad',
    open: true,
    art: (
      <>
        <path d="M4 1h16v21H4z" fill="#dfeaf5" />
        <path d="M4 1h16v4H4z" fill="#5b88b8" />
        <text x="5" y="15" fontSize="11" fontWeight="bold" fontFamily="Liberation Serif" fill="#f07a1a">
          A
        </text>
        <path d="M14 9h4M14 12h4M6 17h12" stroke="#6a8fb8" />
        <path d="M2 21h20v3H4z" fill="#b7cbe0" />
      </>
    ),
  },
  {
    name: 'PDF',
    art: (
      <>
        <path d="M1 20C2 10 8 4 22 4v16z" fill="#ffe600" />
        <path d="M2 14C4 6 10 2 22 2" stroke="#333" strokeWidth="1.500" />
        <text x="4" y="18" fontSize="8" fontWeight="bold" fontFamily="Liberation Sans" fill="#111">
          PDF
        </text>
      </>
    ),
  },
  {
    name: 'Network folder',
    art: (
      <>
        <path d="M1 0h9v17H1z" fill="#f3d47a" />
        <path d="M7 8l12 3v9L7 16z" fill="#2f93dd" />
        <path d="M12 12l12 2v7l-10-1z" fill="#54b2f0" />
        <path d="M5 19l13 3-2 2-9-2z" fill="#42c065" />
      </>
    ),
  },
  {
    name: 'Copy files',
    art: (
      <>
        <path d="M2 1h9l3 3v12H2z" fill="#fff" stroke="#aaa" />
        <path d="M8 7h8l4 4v11H8z" fill="#f5f5f5" stroke="#999" />
        <path d="M12 16h6v-4l6 6-6 6v-4h-6z" fill="#25b335" />
      </>
    ),
  },
  {
    name: 'Delete folder',
    art: (
      <>
        <path d="M3 1h15v22H3z" fill="#f6d98b" />
        <path d="M3 1h3v22H3z" fill="#fff0c0" />
        <path d="M12 14l9 10M21 14l-9 10" stroke="#d01414" strokeWidth="3" />
      </>
    ),
  },
  {
    name: 'Move folder',
    art: (
      <>
        <path d="M3 1h15v22H3z" fill="#f6d98b" />
        <path d="M3 1h3v22H3z" fill="#fff0c0" />
        <path d="M10 17l6-6v3.500h7v5h-7V23z" fill="#3f92d8" />
      </>
    ),
  },
  {
    name: 'Scan tool',
    art: (
      <>
        <path d="M.5.5h23v23H.5z" fill="#fafafa" stroke="#999" />
        <path d="M19 6H7q-3 0-3 2.500T7 11h12V6" stroke="#3a3f9a" strokeWidth="1.300" />
        <path d="M4 14.500h14v6M9 14.500l9 6" stroke="#444" strokeWidth="1.300" />
      </>
    ),
  },
  {
    name: 'Remote desktop',
    art: (
      <>
        <path d="M2 2l16-2 2 13L4 16z" fill="#d7dade" />
        <path d="M4 3l13-1.500L18.500 12 5.500 14z" fill="#1738c8" />
        <path d="M8 16l6-1 3 5H4z" fill="#b5b9bf" />
        <circle cx="17" cy="18" r="5.500" fill="#e6e8ea" />
        <path d="M14 16l3 2-2 3M19 15l-2 3 3 2" stroke="#2c9a44" strokeWidth="1.300" />
      </>
    ),
  },
  {
    name: 'Photos',
    open: true,
    art: (
      <>
        <rect x="1" y="0" width="22" height="24" rx="3" fill="#2a70c8" />
        <path d="M12 0h8a3 3 0 013 3v13z" fill="#6b50b8" />
        <path d="M1 20L12 9l11 11v1a3 3 0 01-3 3H4a3 3 0 01-3-3z" fill="#35c0f5" />
        <path d="M5 24l7-7 7 7z" fill="#a8e8ff" />
        <circle cx="17" cy="5" r="2" fill="#fff" />
      </>
    ),
  },
];

function Taskbar() {
  return (
    <div className="flex h-10 bg-[#071a28] text-white">
      <button aria-label="Start" className="flex w-12 items-center justify-center">
        <Icon>
          <path d="M0 2.300L6.500 1.400V7.500H0zM7.500 1.200L16 0v7.500H7.500zM0 8.500h6.500v6.200L0 13.800zM7.500 8.500H16V16l-8.500-1.200z" fill="#fff" />
        </Icon>
      </button>
      <label className="flex w-72 items-center border border-[#c8c8c8] bg-[#f2f3f5] pl-[11px]">
        <Icon size="size-[17px]" box={17}>
          <circle cx="10.500" cy="6.500" r="5.500" stroke="#222" strokeWidth="1.300" />
          <path d="M6.500 10.500L.5 16.500" stroke="#222" strokeWidth="1.300" />
        </Icon>
        <input
          aria-label="Search"
          placeholder="Type here to search"
          className="ml-3 w-52 text-sm outline-none placeholder:text-[#333]"
        />
      </label>
      <div className="ml-[2px] flex flex-1">
        {APPS.map(({ name, open, art }) => (
          <button
            key={name}
            aria-label={name}
            className={`flex w-[49px] flex-col items-center pt-2 ${name === 'Alphacam' ? 'bg-[#0e3f6b]' : ''}`}
          >
            {art ? <Icon size="size-6" box={24}>{art}</Icon> : <AcLogo className="size-6 text-base" />}
            {open && (
              <span className={`mt-[6px] h-[2px] bg-[#76b9ed] ${name === 'Alphacam' ? 'w-full' : 'w-10'}`} />
            )}
          </button>
        ))}
      </div>
      <div className="flex items-center">
        <button aria-label="Show hidden icons">
          <ChevronUp className="size-4" />
        </button>
        <button aria-label="Network" className="ml-2">
          <Icon>
            <path d="M5.500 3.500h10v8h-10zM10.500 11.500v3M7 14.500h7M.5 1.500h4v4h-4zM2.500 5.500v6h3" stroke="#fff" />
          </Icon>
        </button>
        <button aria-label="Volume" className="ml-2">
          <Icon>
            <path d="M.5 5.500H3L6.500 2.500v11L3 10.500H.5zM9 5.500q2 2.500 0 5M11 4q3.500 4 0 8M13 2.500q5 5.500 0 11" stroke="#fff" />
          </Icon>
        </button>
        <button className="ml-2 w-[56px] text-center text-xs leading-[18px]">
          <span className="block">3:02 PM</span>
          <span className="block">7/29/2026</span>
        </button>
        <button aria-label="Notifications" className="ml-4">
          <Icon>
            <path d="M0 1h16v11h-5l-3 3-3-3H0z" fill="#fff" />
            <path d="M3 4.500h10M3 6.500h10M3 8.500h7" stroke="#071a28" />
          </Icon>
        </button>
        <span className="mr-1 ml-5 h-10 w-px bg-[#5a6872]" />
      </div>
    </div>
  );
}

export default function App() {
  return (
    <div className="flex min-h-screen flex-col bg-[#f0f0f0] font-['Open_Sans',sans-serif]">
      <TitleBar />
      <Ribbon />
      <WarningBar />
      <main className="flex flex-1">
        <OperationsPanel />
        <div className="w-[5px] shrink-0 bg-[#b9cbe4]" />
        <div className="relative min-w-0 flex-1 border-2 border-t-[#7a7a7a] border-r-white border-b-white border-l-[#7a7a7a] bg-black">
          <Drawing />
          <MaterialDialog />
        </div>
      </main>
      <div className="h-8 border-b border-[#a0a0a0]" />
      <div className="h-px bg-white" />
      <StatusBar />
      <Taskbar />
    </div>
  );
}
